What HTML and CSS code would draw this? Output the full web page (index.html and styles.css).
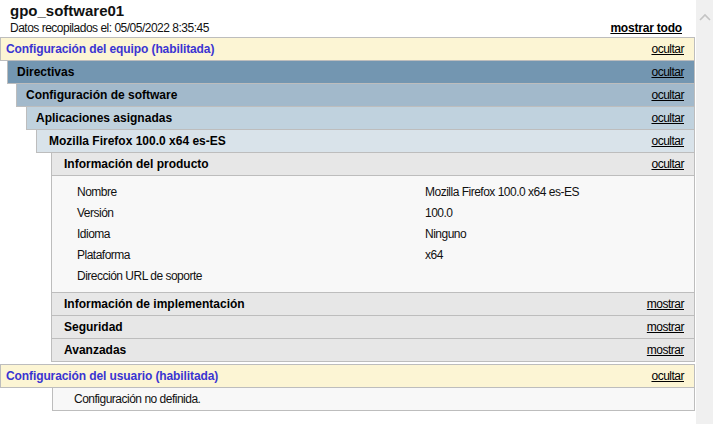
FILE: index.html
```html
<!DOCTYPE html>
<html lang="es">
<head>
<meta charset="utf-8">
<title>gpo_software01</title>
<link rel="stylesheet" href="styles.css">
</head>
<body>
<div class="page">
  <div class="main">
    <div class="header">
      <div class="title">gpo_software01</div>
      <div class="meta">
        <span class="reg">Datos recopilados el: 05/05/2022 8:35:45</span>
        <a class="showall" href="#">mostrar todo</a>
      </div>
    </div>

    <div class="head h-yellow first"><span class="ht">Configuración del equipo (habilitada)</span><a href="#">ocultar</a></div>
    <div class="lvl l1">
      <div class="head h1"><span class="hb">Directivas</span><a href="#">ocultar</a></div>
      <div class="lvl l2">
        <div class="head h2"><span class="hb">Configuración de software</span><a href="#">ocultar</a></div>
        <div class="lvl l3">
          <div class="head h3"><span class="hb">Aplicaciones asignadas</span><a href="#">ocultar</a></div>
          <div class="lvl l4">
            <div class="head h4"><span class="hb">Mozilla Firefox 100.0 x64 es-ES</span><a href="#">ocultar</a></div>
            <div class="lvl l5">
              <div class="head h5"><span class="hb">Información del producto</span><a href="#">ocultar</a></div>
              <div class="body info">
                <span>Nombre</span><span>Mozilla Firefox 100.0 x64 es-ES</span>
                <span>Versión</span><span>100.0</span>
                <span>Idioma</span><span>Ninguno</span>
                <span>Plataforma</span><span>x64</span>
                <span>Dirección URL de soporte</span><span></span>
              </div>
              <div class="head h5"><span class="hb">Información de implementación</span><a href="#">mostrar</a></div>
              <div class="head h5"><span class="hb">Seguridad</span><a href="#">mostrar</a></div>
              <div class="head h5"><span class="hb">Avanzadas</span><a href="#">mostrar</a></div>
            </div>
          </div>
        </div>
      </div>
    </div>

    <div class="head h-yellow user"><span class="ht">Configuración del usuario (habilitada)</span><a href="#">ocultar</a></div>
    <div class="lvl l5 top">
      <div class="body note">Configuración no definida.</div>
    </div>
  </div>
  <div class="gap"></div>
  <div class="scrollbar">
    <svg class="arrow" width="12" height="8" viewBox="0 0 12 8"><path d="M1 7 L6 2 L11 7" fill="none" stroke="#c4c4c4" stroke-width="1.6"/></svg>
  </div>
</div>
</body>
</html>
```

FILE: styles.css
```css
html, body {
  margin: 0;
  padding: 0;
  background: #ffffff;
}
body {
  font-family: "Liberation Sans", Arial, sans-serif;
  font-size: 12px;
  color: #000;
}
.page {
  display: flex;
  height: 424px;
  overflow: hidden;
}
.main {
  width: 695px;
  flex: none;
}
.gap {
  width: 1px;
  flex: none;
}
.scrollbar {
  width: 17px;
  flex: none;
  background: #f0f0f0;
  display: flex;
  justify-content: center;
  align-items: flex-start;
}
.arrow {
  margin-top: 13px;
  margin-left: 1px;
}
.header {
  padding: 1px 0 0 10px;
  margin-bottom: 1px;
}
.title {
  font-size: 15px;
  font-weight: bold;
  line-height: 19px;
  height: 19px;
  color: #111;
}
.meta {
  display: flex;
  justify-content: space-between;
  align-items: baseline;
  line-height: 16px;
  height: 16px;
  padding-right: 13px;
  color: #111;
}
.reg {
  letter-spacing: -0.5px;
}
.showall {
  font-weight: bold;
  color: #000;
  letter-spacing: -0.2px;
}
a {
  color: #000;
  text-decoration: underline;
  letter-spacing: -0.5px;
}
.head {
  display: flex;
  justify-content: space-between;
  align-items: center;
  height: 22px;
  border: 1px solid #bdbdbd;
  margin-top: -1px;
  padding: 0 10px 0 9px;
}
.head.first {
  margin-top: 0;
}
.head.user {
  margin-top: 2px;
}
.body + .head {
  margin-top: 0;
}
.hb {
  font-weight: bold;
}
.h-yellow {
  background: #fcf5d4;
  padding-left: 5px;
}
.ht {
  color: #3a34d2;
  font-weight: bold;
  letter-spacing: -0.1px;
}
.h1 { background: #7396b1; }
.h2 { background: #a2b9cb; }
.h3 { background: #c0d2de; }
.h4 { background: #d9e3ea; padding-left: 12px; }
.h5 { background: #e7e7e7; padding-left: 12px; }

.l1 { margin-left: 7px; }
.l2 { margin-left: 9px; }
.l3 { margin-left: 10px; }
.l4 { margin-left: 10px; }
.l5 { margin-left: 15px; }
.main > .l5 { margin-left: 52px; }

.body {
  background: #f8f8f8;
  border-left: 1px solid #bdbdbd;
  border-right: 1px solid #bdbdbd;
}
.info {
  display: grid;
  grid-template-columns: 348px 1fr;
  padding: 6px 0 5px 25px;
  line-height: 21px;
  color: #111;
  letter-spacing: -0.5px;
}
.note {
  height: 22px;
  line-height: 23px;
  padding-left: 21px;
  border-bottom: 1px solid #bdbdbd;
  color: #111;
  letter-spacing: -0.5px;
}
```
